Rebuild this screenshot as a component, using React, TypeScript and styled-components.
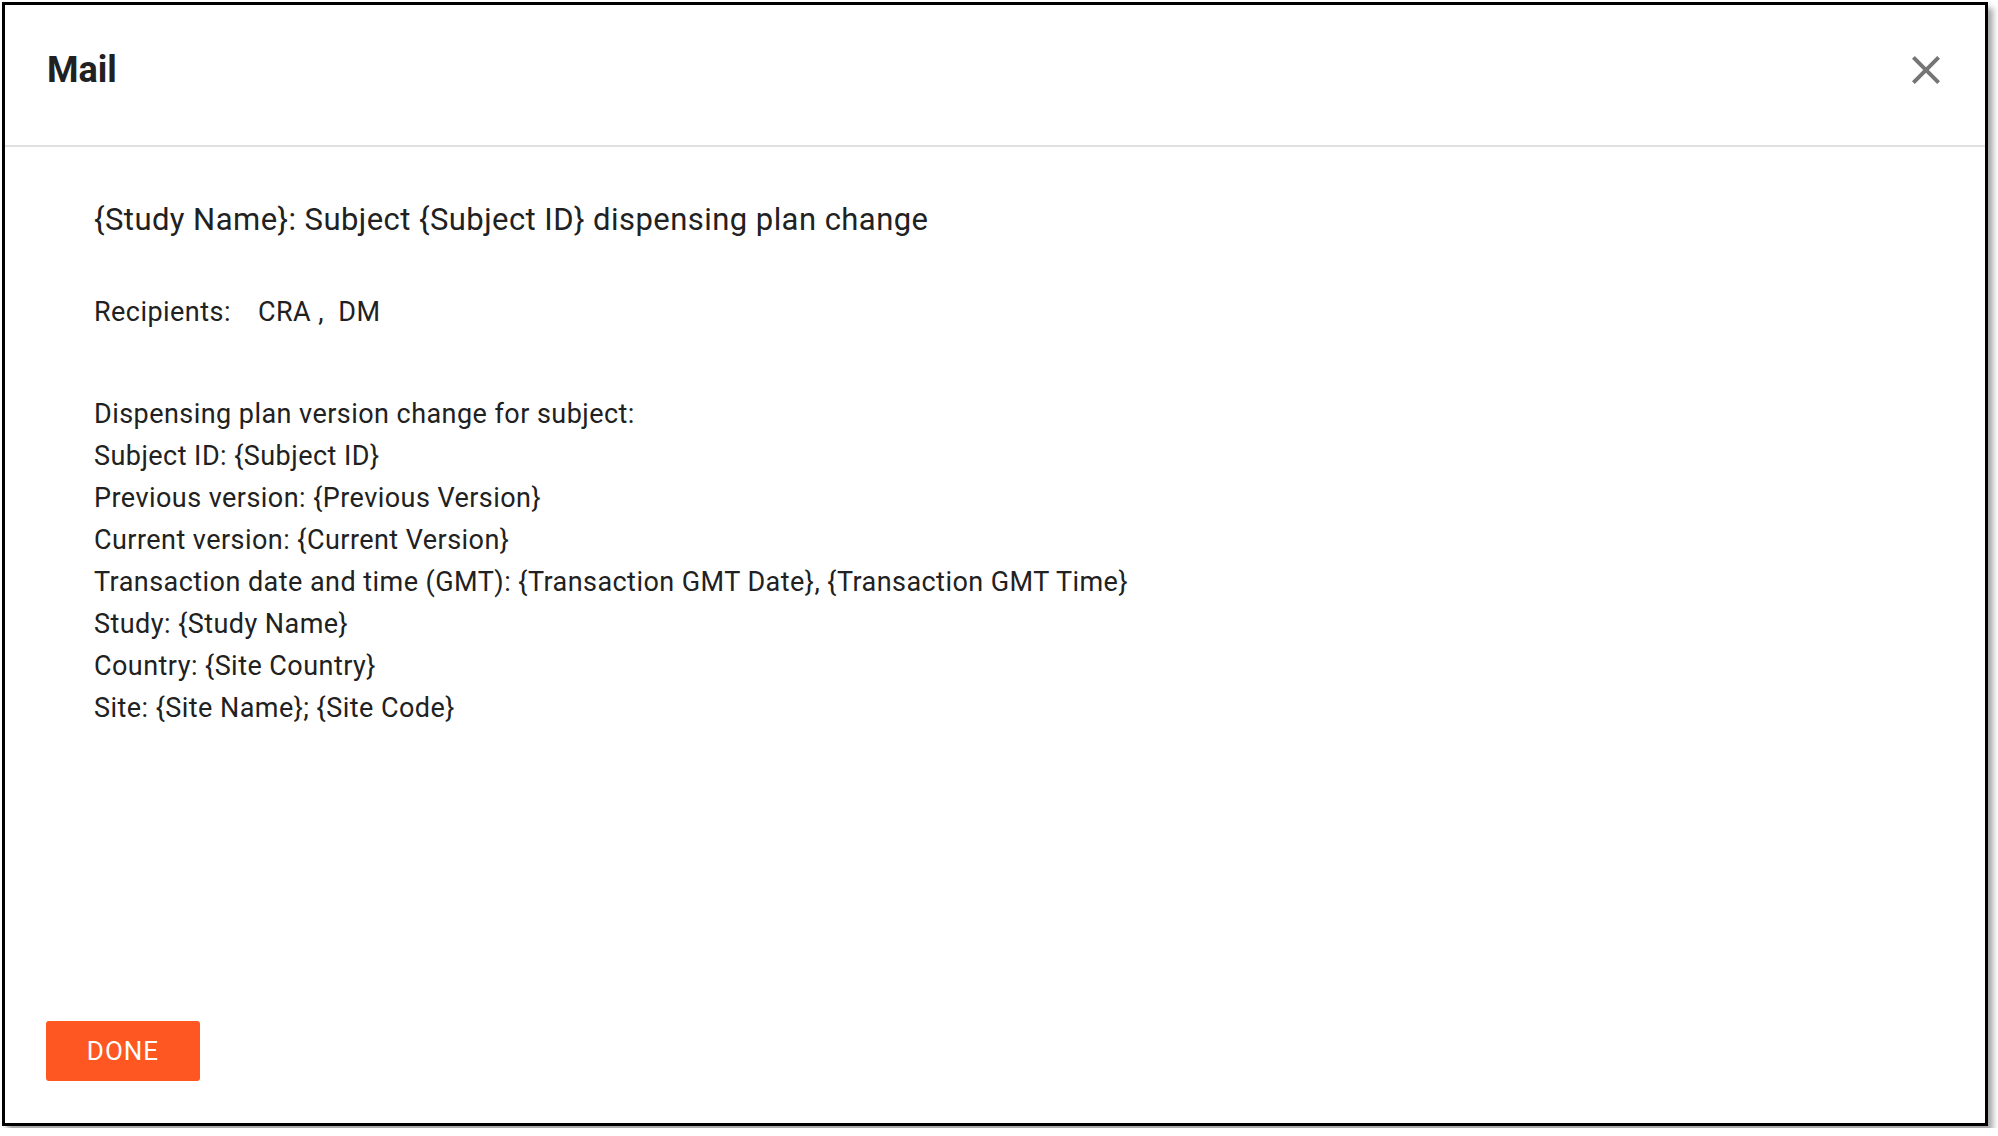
import React from "react";
import styled, { createGlobalStyle } from "styled-components";

const GlobalStyle = createGlobalStyle`
  html, body {
    margin: 0;
    padding: 0;
    background: #ffffff;
  }
  body {
    padding: 2px;
    font-family: Roboto, "Liberation Sans", Arial, sans-serif;
    color: #212121;
  }
  * {
    box-sizing: border-box;
  }
`;

const Dialog = styled.div`
  width: 1986px;
  height: 1124px;
  display: flex;
  flex-direction: column;
  background: #ffffff;
  border: 3px solid #000000;
  box-shadow: 5px 6px 6px rgba(0, 0, 0, 0.35);
`;

const Header = styled.div`
  height: 142px;
  display: flex;
  align-items: center;
  justify-content: space-between;
  padding: 0 35px 10px 42px;
  border-bottom: 2px solid #e0e0e0;
`;

const Title = styled.h2`
  margin: 0;
  font-size: 36px;
  font-weight: 700;
  color: #212121;
`;

const CloseButton = styled.button`
  width: 48px;
  height: 48px;
  padding: 0;
  border: none;
  background: transparent;
  display: flex;
  align-items: center;
  justify-content: center;
  cursor: pointer;
`;

const Body = styled.div`
  flex: 1;
  display: flex;
  flex-direction: column;
  padding: 55px 89px 0 89px;
`;

const Subject = styled.div`
  font-size: 31px;
  line-height: 36px;
  letter-spacing: 0.45px;
  color: #212121;
  margin-bottom: 53px;
`;

const Recipients = styled.div`
  display: flex;
  font-size: 27px;
  line-height: 42px;
  letter-spacing: 0.45px;
  margin-bottom: 60px;
`;

const RecipientList = styled.span`
  margin-left: 27px;
  white-space: pre;
`;

const MessageLine = styled.div`
  font-size: 27px;
  line-height: 42px;
  letter-spacing: 0.45px;
  color: #212121;
`;

const Footer = styled.div`
  padding: 0 0 42px 41px;
`;

const DoneButton = styled.button`
  width: 154px;
  height: 60px;
  border: none;
  border-radius: 3px;
  background: #ff5722;
  color: #ffffff;
  font-family: Roboto, "Liberation Sans", Arial, sans-serif;
  font-size: 26px;
  font-weight: 400;
  letter-spacing: 1px;
  text-transform: uppercase;
  cursor: pointer;
`;

const messageLines = [
  "Dispensing plan version change for subject:",
  "Subject ID: {Subject ID}",
  "Previous version: {Previous Version}",
  "Current version: {Current Version}",
  "Transaction date and time (GMT): {Transaction GMT Date}, {Transaction GMT Time}",
  "Study: {Study Name}",
  "Country: {Site Country}",
  "Site: {Site Name}; {Site Code}",
];

const CloseIcon = () => (
  <svg width="48" height="48" viewBox="0 0 24 24" fill="#757575">
    <path d="M19 6.41L17.59 5 12 10.59 6.41 5 5 6.41 10.59 12 5 17.59 6.41 19 12 13.41 17.59 19 19 17.59 13.41 12z" />
  </svg>
);

export default function App() {
  return (
    <>
      <GlobalStyle />
      <Dialog>
        <Header>
          <Title>Mail</Title>
          <CloseButton aria-label="Close">
            <CloseIcon />
          </CloseButton>
        </Header>
        <Body>
          <Subject>
            {"{Study Name}: Subject {Subject ID} dispensing plan change"}
          </Subject>
          <Recipients>
            <span>Recipients:</span>
            <RecipientList>{"CRA ,  DM"}</RecipientList>
          </Recipients>
          {messageLines.map((line) => (
            <MessageLine key={line}>{line}</MessageLine>
          ))}
        </Body>
        <Footer>
          <DoneButton>Done</DoneButton>
        </Footer>
      </Dialog>
    </>
  );
}
